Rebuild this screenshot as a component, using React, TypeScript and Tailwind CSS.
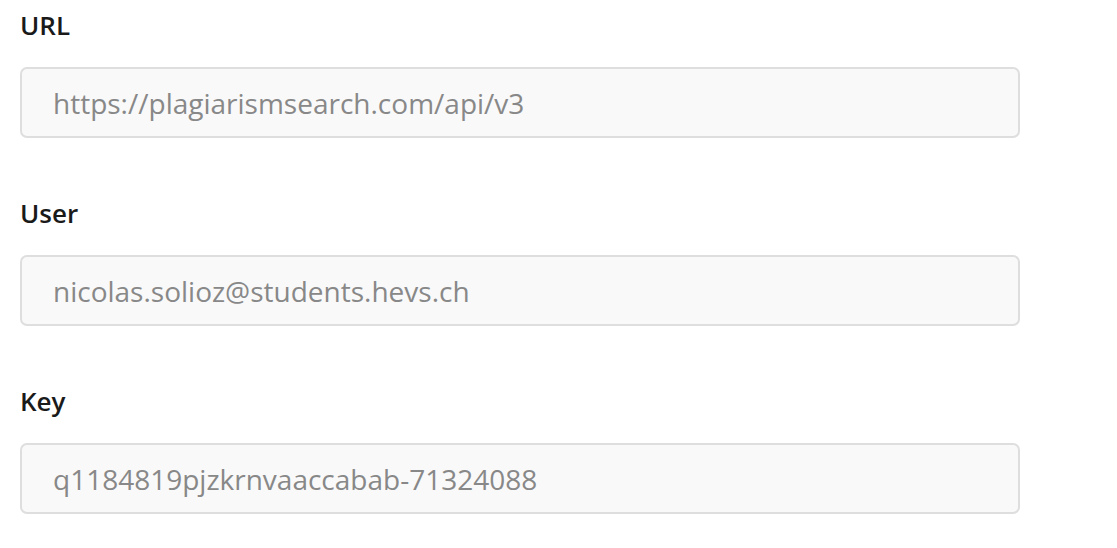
const fields = [
  { label: "URL", value: "https://plagiarismsearch.com/api/v3" },
  { label: "User", value: "nicolas.solioz@students.hevs.ch" },
  { label: "Key", value: "q1184819pjzkrnvaaccabab-71324088" },
];

export default function App() {
  return (
    <div className="min-h-[548px] bg-white pl-5 pt-[7px] font-['Open_Sans',sans-serif]">
      <div className="flex w-[1000px] flex-col gap-[57px]">
        {fields.map((f) => (
          <div key={f.label} className="flex flex-col gap-[24px]">
            <label className="text-[26px] leading-[36px] font-semibold text-[#1a1a1a]">
              {f.label}
            </label>
            <input
              readOnly
              value={f.value}
              className="h-[71px] w-full rounded-[7px] border-2 border-[#dedede] bg-[#f9f9f9] px-[31px] text-[28px] text-[#888] outline-none"
            />
          </div>
        ))}
      </div>
    </div>
  );
}
